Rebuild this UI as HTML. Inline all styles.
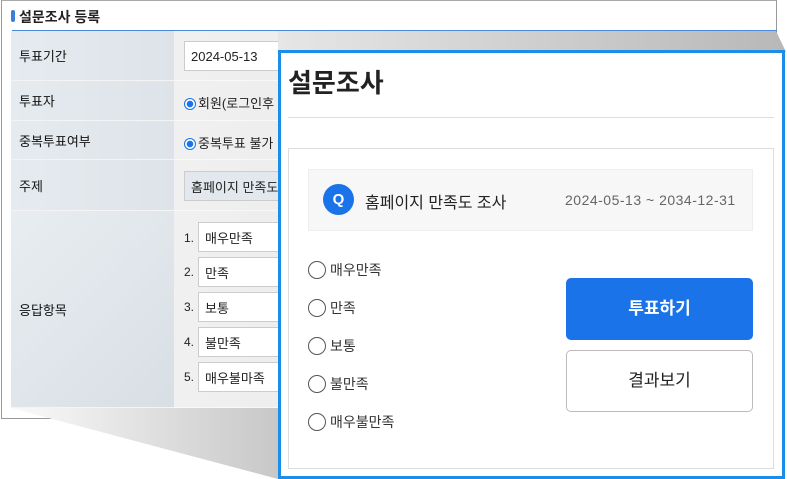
<!DOCTYPE html>
<html><head><meta charset="utf-8"><style>
*{box-sizing:border-box;margin:0;padding:0}
body{width:787px;height:479px;background:#fff;position:relative;overflow:hidden;font-family:"Liberation Sans","Noto Sans CJK KR",sans-serif;color:#222}
.abs{position:absolute}
.win{left:1px;top:0;width:776px;height:419px;border:1px solid #999;border-top:1px solid #aaa;background:#fff}
.lbl{position:absolute;left:11px;width:163px;background:linear-gradient(90deg,#e6ebf0,#dde3e8);font-size:13px;padding-left:8px;display:flex;align-items:center;border-bottom:1px solid #f4f4f4;color:#111}
.val{position:absolute;left:174px;width:602px;background:linear-gradient(90deg,#f0f0f0,#e4e4e4);border-bottom:1px solid #f8f8f8;font-size:13px}
.inp{position:absolute;border:1px solid #ccc;background:#fff;font-size:13px;padding-left:6px;display:flex;align-items:center}
.rad{display:inline-block;width:12px;height:12px;border-radius:50%;border:1px solid #1a73e8;background:radial-gradient(circle,#1a73e8 3px,#fff 3.5px);vertical-align:-2px;margin-right:2px}
.pop{left:278px;top:50px;width:507px;height:429px;border:3px solid #1a8ee8;background:#fff}
.opt{position:absolute;left:308px;font-size:14px;color:#333;display:flex;align-items:center}
.opt i{display:inline-block;width:18px;height:18px;border:1px solid #555;border-radius:50%;margin-right:4px}
</style></head><body>
<div class="abs win">
 <div class="abs" style="left:9px;top:9px;width:4px;height:12px;background:#3a80d8;border-radius:2px"></div>
 <div class="abs" style="left:17px;top:6px;font-size:14px;font-weight:bold">설문조사 등록</div>
 <div class="abs" style="left:10px;top:29px;width:765px;height:2px;background:#4a8ad8"></div>
</div>
<div class="lbl" style="top:31px;height:50px">투표기간</div>
<div class="val" style="top:31px;height:50px"></div>
<div class="inp" style="left:184px;top:41px;width:144px;height:30px">2024-05-13</div>
<div class="inp" style="left:347px;top:41px;width:144px;height:30px"></div>
<div class="lbl" style="top:81px;height:40px">투표자</div>
<div class="val" style="top:81px;height:40px;padding:12px 0 0 10px"><span class="rad"></span>회원(로그인후</div>
<div class="lbl" style="top:121px;height:39px">중복투표여부</div>
<div class="val" style="top:121px;height:39px;padding:12px 0 0 10px"><span class="rad"></span>중복투표 불가</div>
<div class="lbl" style="top:160px;height:51px">주제</div>
<div class="val" style="top:160px;height:51px"></div>
<div class="inp" style="left:184px;top:171px;width:110px;height:30px;background:#e3e8ee">홈페이지 만족도</div>
<div class="lbl" style="top:211px;height:197px;background:linear-gradient(135deg,#e8edf1,#d8dfe4)">응답항목</div>
<div class="val" style="top:211px;height:197px"></div>
<div class="abs" style="left:184px;top:231px;font-size:12px">1.</div><div class="inp" style="left:198px;top:222px;width:90px;height:30px">매우만족</div>
<div class="abs" style="left:184px;top:265px;font-size:12px">2.</div><div class="inp" style="left:198px;top:257px;width:90px;height:30px">만족</div>
<div class="abs" style="left:184px;top:300px;font-size:12px">3.</div><div class="inp" style="left:198px;top:292px;width:90px;height:30px">보통</div>
<div class="abs" style="left:184px;top:335px;font-size:12px">4.</div><div class="inp" style="left:198px;top:327px;width:90px;height:30px">불만족</div>
<div class="abs" style="left:184px;top:370px;font-size:12px">5.</div><div class="inp" style="left:198px;top:362px;width:90px;height:30px">매우불마족</div>
<svg class="abs" style="left:0;top:0" width="787" height="479">
<defs><linearGradient id="g2" x1="0" y1="0" x2="1" y2="0"><stop offset="0" stop-color="#fafafa"/><stop offset="1" stop-color="#c8c8c8"/></linearGradient>
<linearGradient id="g3" x1="0" y1="0" x2="1" y2="0"><stop offset="0" stop-color="#e6e6e6"/><stop offset="1" stop-color="#b8b8b8"/></linearGradient></defs>
<polygon points="11,408 278,408 278,479" fill="url(#g2)"/>
<polygon points="278,31 776,31 786,52 278,52" fill="url(#g3)"/>
</svg>
<div class="abs pop">
 <div class="abs" style="left:7px;top:10px;font-size:26px;font-weight:bold;color:#222">설문조사</div>
 <div class="abs" style="left:7px;top:64px;width:486px;height:1px;background:#ddd"></div>
 <div class="abs" style="left:7px;top:95px;width:486px;height:321px;border:1px solid #ddd"></div>
 <div class="abs" style="left:27px;top:116px;width:445px;height:62px;background:#f7f7f7;border:1px solid #eee"></div>
 <div class="abs" style="left:42px;top:131px;width:31px;height:31px;border-radius:50%;background:#1a73e8;color:#fff;font-weight:bold;font-size:15px;text-align:center;line-height:31px">Q</div>
 <div class="abs" style="left:84px;top:136px;font-size:16px;color:#222">홈페이지 만족도 조사</div>
 <div class="abs" style="left:284px;top:139px;font-size:14px;letter-spacing:0.5px;color:#666">2024-05-13 ~ 2034-12-31</div>
 <div class="abs" style="left:285px;top:225px;width:187px;height:62px;background:#1a73e8;border-radius:5px;color:#fff;font-size:17px;font-weight:bold;text-align:center;line-height:62px">투표하기</div>
 <div class="abs" style="left:285px;top:297px;width:187px;height:62px;border:1px solid #bbb;border-radius:5px;color:#222;font-size:17px;text-align:center;line-height:60px">결과보기</div>
</div>
<div class="opt" style="top:260px"><i></i>매우만족</div>
<div class="opt" style="top:298px"><i></i>만족</div>
<div class="opt" style="top:336px"><i></i>보통</div>
<div class="opt" style="top:374px"><i></i>불만족</div>
<div class="opt" style="top:412px"><i></i>매우불만족</div>
</body></html>
